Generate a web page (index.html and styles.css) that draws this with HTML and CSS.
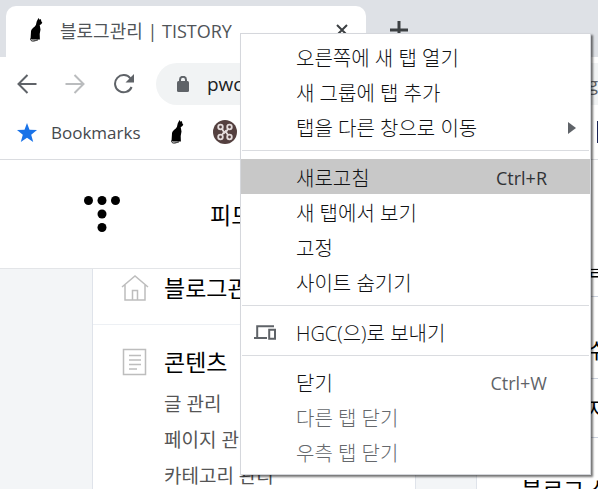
FILE: index.html
```html
<!DOCTYPE html>
<html lang="ko">
<head>
  <meta charset="UTF-8">
  <title>블로그관리 | TISTORY</title>
  <link rel="stylesheet" href="styles.css">
</head>
<body>

  <svg class="sprite" aria-hidden="true">
    <symbol id="cat" viewBox="0 0 24 24">
      <path d="M14.500 0l1.200 1.800 1.200-.8.4 2.200 1 1.600-1.400 1.700-1.200.6.8 4.400-.8 4.500.2 5.500h-8.400l-.9-1.500.4-6.500c.3-3 3.500-4 4.900-6.500l.8-3.500z"/>
      <path d="M7.800 19.500c-1.800 1-1.500 3.300.6 3.500 2.200.2 4-.8 5.400-1" fill="none" stroke="#000" stroke-width="1"/>
    </symbol>
  </svg>

  <div class="tab-strip">
    <div class="tab">
      <svg class="favicon"><use href="#cat"/></svg>
      <span class="tab-title">블로그관리 | TISTORY</span>
      <button class="tab-close" aria-label="닫기">
        <svg width="14" height="14" viewBox="0 0 14 14"><path d="M2 2l10 10M12 2L2 12"/></svg>
      </button>
    </div>
    <button class="new-tab" aria-label="새 탭">
      <svg width="18" height="18" viewBox="0 0 18 18"><path d="M9 0v18M0 9h18"/></svg>
    </button>
  </div>

  <div class="toolbar">
    <button aria-label="뒤로">
      <svg width="20" height="20" viewBox="0 0 20 20"><path d="M19.500 10H2M10.500 1L1.500 10l9 9"/></svg>
    </button>
    <button class="off" aria-label="앞으로" disabled>
      <svg width="20" height="20" viewBox="0 0 20 20"><path d="M.5 10H18M9.500 1l9 9-9 9"/></svg>
    </button>
    <button aria-label="새로고침">
      <svg width="22" height="20" viewBox="0 0 22 20"><path d="M17.500 4.500A8.600 8.600 0 1 0 18.600 13"/><path class="solid" d="M21 0v8.500h-8.500z"/></svg>
    </button>
    <div class="address">
      <svg width="12" height="16" viewBox="0 0 12 16"><rect x="0" y="5" width="12" height="11" rx="1.500"/><path d="M3 6V3.800a3 3 0 0 1 6 0V6"/></svg>
      <input type="text" aria-label="주소" value="pwc">
      <span>g</span>
    </div>
  </div>

  <div class="bookmarks">
    <a href="#">
      <svg width="20" height="19" viewBox="0 0 20 19"><path fill="#1a73e8" d="M10 0l2.500 6.800 7.500.3-5.800 4.600 2 7.300-6.200-4.200L3.800 19l2-7.300L0 7.100l7.500-.3z"/></svg>
      Bookmarks
    </a>
    <a href="#" aria-label="cat"><svg class="favicon"><use href="#cat"/></svg></a>
    <a href="#" aria-label="command">
      <svg width="24" height="24" viewBox="0 0 24 24">
        <circle cx="12" cy="12" r="12" fill="#54403f"/>
        <g fill="none" stroke="#e4dcdc" stroke-width="1.800">
          <circle cx="7.500" cy="7" r="2.300"/><circle cx="16.500" cy="7" r="2.300"/>
          <circle cx="7.500" cy="17" r="2.300"/><circle cx="16.500" cy="17" r="2.300"/>
          <path d="M9 9l2 3-2 3M15 9l-2 3 2 3M10.500 13.500l3-3"/>
        </g>
      </svg>
    </a>
    <a class="last" href="#" aria-label="bookmark"></a>
  </div>

  <header class="header">
    <svg width="36" height="36" viewBox="0 0 36 36">
      <circle cx="4.500" cy="4.500" r="4.500"/><circle cx="18" cy="4.500" r="4.500"/><circle cx="31.500" cy="4.500" r="4.500"/>
      <circle cx="18" cy="18" r="4.500"/><circle cx="18" cy="31.500" r="4.500"/>
    </svg>
    <a href="#">피드</a>
  </header>

  <main class="page">
    <nav class="side">
      <div class="side-home">
        <svg width="28" height="28" viewBox="0 0 28 28"><path d="M1 13L14 2l13 11M4 11v15h20V11M11.500 26V16.500h5V26"/></svg>
        <a href="#">블로그관리</a>
      </div>
      <div class="side-content">
        <svg width="28" height="28" viewBox="0 0 28 28"><path d="M2.500 1.500h22v25h-22zM8 7.500h12M8 12h12M8 16.500h12M8 21h8"/></svg>
        <div>
          <a href="#">콘텐츠</a>
          <ul>
            <li><a href="#">글 관리</a></li>
            <li><a href="#">페이지 관리</a></li>
            <li><a href="#">카테고리 관리</a></li>
          </ul>
        </div>
      </div>
    </nav>
    <section class="panel">
      <div class="row short">글</div>
      <div class="row tall">수</div>
      <div class="row">지</div>
      <h2>블로그 설정</h2>
    </section>
  </main>

  <div class="menu" role="menu">
    <button role="menuitem">오른쪽에 새 탭 열기</button>
    <button role="menuitem">새 그룹에 탭 추가</button>
    <button role="menuitem">탭을 다른 창으로 이동
      <svg class="arrow" width="8" height="12" viewBox="0 0 8 12"><path d="M0 0l8 6-8 6z"/></svg>
    </button>
    <hr>
    <button class="selected" role="menuitem">새로고침 <kbd>Ctrl+R</kbd></button>
    <button role="menuitem">새 탭에서 보기</button>
    <button role="menuitem">고정</button>
    <button role="menuitem">사이트 숨기기</button>
    <hr>
    <button class="with-icon" role="menuitem">
      <svg width="22" height="16" viewBox="0 0 22 16"><path d="M20 1.200H3.200V12M0 13h13M15.200 4.700h5.800v9h-5.800z"/></svg>
      HGC(으)로 보내기
    </button>
    <hr>
    <button role="menuitem">닫기 <kbd>Ctrl+W</kbd></button>
    <button role="menuitem" disabled>다른 탭 닫기</button>
    <button role="menuitem" disabled>우측 탭 닫기</button>
  </div>

</body>
</html>
```

FILE: styles.css
```css
* {
  box-sizing: border-box;
}

body {
  margin: 0;
  height: 100vh;
  overflow: hidden;
  display: flex;
  flex-direction: column;
  background: #fff;
  color: #000;
  font-family: "Open Sans", "Noto Sans CJK KR", sans-serif;
  font-size: 18px;
}

a {
  color: inherit;
  text-decoration: none;
}

button {
  padding: 0;
  border: none;
  background: none;
  font: inherit;
}

svg {
  display: block;
  flex-shrink: 0;
}

.sprite {
  position: absolute;
  width: 0;
  height: 0;
}

.favicon {
  width: 24px;
  height: 24px;
}

/* browser tabs */
.tab-strip {
  flex-shrink: 0;
  display: flex;
  height: 57px;
  padding: 6px 6px 0;
  background: #dee1e6;
}

.tab {
  display: flex;
  align-items: center;
  width: 360px;
  padding: 0 17px 3px 18px;
  background: #fff;
  border-radius: 10px 10px 0 0;
}

.tab-title {
  flex: 1;
  margin-left: 12px;
  color: #505458;
}

.tab-close svg,
.new-tab svg {
  fill: none;
  stroke: #3c4043;
  stroke-width: 2;
}

.new-tab {
  margin: 0 0 3px 24px;
}

.new-tab svg {
  stroke-width: 3;
}

.toolbar {
  flex-shrink: 0;
  display: flex;
  align-items: center;
  gap: 28px;
  height: 54px;
  padding-left: 17px;
}

.toolbar button svg {
  fill: none;
  stroke: #5f6368;
  stroke-width: 2;
}

.toolbar .off svg {
  stroke: #babcbe;
}

.toolbar .solid {
  fill: #5f6368;
  stroke: none;
}

.address {
  flex: 1;
  display: flex;
  align-items: center;
  height: 42px;
  margin-left: -7px;
  padding-left: 21px;
  background: #f1f3f4;
  border-radius: 21px 0 0 21px;
  font-size: 19px;
}

.address svg {
  fill: #5f6368;
}

.address svg path {
  fill: none;
  stroke: #5f6368;
  stroke-width: 2;
}

.address input {
  flex: 1;
  min-width: 0;
  margin-left: 18px;
  padding: 0;
  border: none;
  background: none;
  color: #202124;
  font: inherit;
}

.address span {
  color: #5f6368;
}

.bookmarks {
  flex-shrink: 0;
  display: flex;
  align-items: center;
  height: 49px;
  padding: 0 0 6px 17px;
  gap: 24px;
  border-bottom: 1px solid #dadce0;
  color: #45494d;
  font-size: 17px;
}

.bookmarks a {
  display: flex;
  align-items: center;
  gap: 14px;
}

.bookmarks .last {
  width: 1px;
  height: 22px;
  margin-left: auto;
  background: #1b2456;
}

/* blog admin */
.header {
  flex-shrink: 0;
  display: flex;
  align-items: center;
  gap: 90px;
  height: 109px;
  padding-left: 84px;
  border-bottom: 1px solid #e3e5e8;
  font-size: 23px;
}

.page {
  flex: 1;
  min-height: 0;
  overflow: hidden;
  display: grid;
  grid-template-columns: 324px 1fr;
  gap: 60px;
  padding-left: 92px;
  background: #f3f5f7;
  font-size: 23px;
}

.side {
  background: #fff;
  border: 1px solid #dfe3ea;
  border-width: 0 1px;
}

.side svg {
  fill: none;
  stroke: #bdbdbd;
  stroke-width: 1.5;
}

.side-home,
.side-content {
  display: flex;
  gap: 15px;
  padding-left: 28px;
  line-height: 34px;
}

.side-home {
  align-items: center;
  height: 56px;
  padding-bottom: 18px;
  border-bottom: 1px solid #edf0f4;
}

.side-content {
  padding-top: 20px;
}

.side-content > svg {
  margin-top: 3px;
}

.side ul {
  margin: 7px 0 0;
  padding: 0;
  list-style: none;
  color: #555;
  font-size: 19px;
  line-height: 36px;
}

.panel {
  background: #fff;
  border-left: 1px solid #dfe3ea;
}

.row {
  display: flex;
  align-items: center;
  height: 59px;
  padding-left: 110px;
  border-bottom: 1px solid #ccd3df;
  font-size: 21px;
}

.row.short {
  align-items: flex-end;
  height: 28px;
  padding-bottom: 17px;
  line-height: 24px;
}

.row.tall {
  height: 82px;
  padding-top: 22px;
}

.panel h2 {
  margin: 34px 0 0 44px;
  font-size: 23px;
  font-weight: 400;
  white-space: nowrap;
}

/* tab context menu */
.menu {
  position: absolute;
  top: 33px;
  left: 240px;
  width: 351px;
  padding: 5px 0;
  background: #fff;
  border: 1px solid #d5d7dc;
  box-shadow: 2px 2px 2px rgba(0, 0, 0, 0.55);
}

.menu button {
  display: flex;
  align-items: center;
  width: 100%;
  height: 35px;
  padding: 2px 43px 0 55px;
  color: #101113;
  font-size: 20px;
  font-weight: 300;
  text-align: left;
}

.menu button:disabled {
  color: #65686c;
}

.menu .selected {
  background: #c8c8c8;
}

.menu .with-icon {
  gap: 20px;
  padding-left: 13px;
}

.menu hr {
  margin: 6px 1px 8px;
  border: none;
  border-top: 1px solid #dadce0;
}

.menu kbd {
  margin-left: auto;
  color: #5f6368;
  font-family: inherit;
  font-size: 18px;
  font-weight: 400;
}

.menu .selected kbd {
  color: #303236;
}

.menu .arrow {
  margin: 0 -29px 0 auto;
  fill: #5f6368;
}

.with-icon svg {
  fill: none;
  stroke: #5f6368;
  stroke-width: 2;
}
```
